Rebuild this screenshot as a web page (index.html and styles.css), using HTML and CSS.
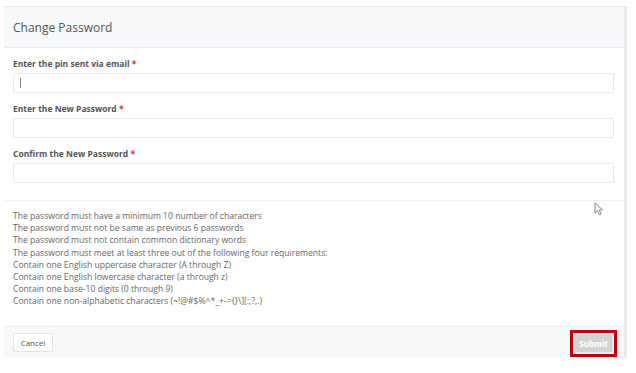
FILE: index.html
```html
<!DOCTYPE html>
<html lang="en">

<head>
  <meta charset="UTF-8">
  <meta name="viewport" content="width=device-width, initial-scale=1.0">
  <title>Change Password</title>
  <link rel="stylesheet" href="styles.css">
</head>

<body>
  <div class="modal">
    <div class="modal-header">
      <h1>Change Password</h1>
    </div>

    <form class="modal-form">
      <div class="field">
        <label for="pin">Enter the pin sent via email <span class="req">*</span></label>
        <div class="input-wrap">
          <input type="text" id="pin">
          <span class="caret"></span>
        </div>
      </div>
      <div class="field">
        <label for="newpass">Enter the New Password <span class="req">*</span></label>
        <input type="password" id="newpass">
      </div>
      <div class="field">
        <label for="confirm">Confirm the New Password <span class="req">*</span></label>
        <input type="password" id="confirm">
      </div>
    </form>

    <div class="rules">
      <p>The password must have a minimum 10 number of characters</p>
      <p>The password must not be same as previous 6 passwords</p>
      <p>The password must not contain common dictionary words</p>
      <p>The password must meet at least three out of the following four requirements:</p>
      <p>Contain one English uppercase character (A through Z)</p>
      <p>Contain one English lowercase character (a through z)</p>
      <p>Contain one base-10 digits (0 through 9)</p>
      <p>Contain one non-alphabetic characters (~!@#$%^*_+-={}\][:;?,.)</p>
      <svg class="pointer" width="10" height="14" viewBox="0 0 10 14">
        <path d="M1 1 L1 11 L3.5 8.6 L5.6 12.8 L7.2 12 L5.2 7.9 L8.6 7.9 Z" fill="#fff" stroke="#777" stroke-width="0.9" stroke-linejoin="round"/>
      </svg>
    </div>

    <div class="modal-footer">
      <button class="btn-cancel">Cancel</button>
      <div class="submit-mark">
        <button class="btn-submit" disabled>Submit</button>
      </div>
    </div>
  </div>
</body>

</html>
```

FILE: styles.css
```css
* {
  box-sizing: border-box;
  margin: 0;
  padding: 0;
  font-family: 'Open Sans', sans-serif;
}

body {
  background: #fff;
  color: #555;
}

.modal {
  margin: 6px 0 0 4px;
  width: 623px;
  border-top: 1px solid #e7e8ec;
  border-right: 3px solid #e9eaee;
  background: #fff;
}

.modal-header {
  height: 41px;
  padding: 0 9px;
  display: flex;
  align-items: center;
  background: #f7f8fa;
  border-bottom: 1px solid #e8eaed;
}

.modal-header h1 {
  font-size: 12px;
  font-weight: 400;
  color: #555;
  padding-top: 1px;
}

.modal-form {
  padding: 10px 10px 7px 9px;
  border-bottom: 1px solid #eef0f2;
}

.field {
  margin-bottom: 10px;
}

.field label {
  display: block;
  height: 12px;
  line-height: 12px;
  font-size: 8.5px;
  font-weight: 700;
  color: #555;
  margin-bottom: 3px;
}

.req {
  color: #d9363e;
}

.field input {
  display: block;
  width: 100%;
  height: 20px;
  border: 1px solid #e6e7ea;
  border-radius: 2px;
  background: #fff;
  outline: none;
}

.input-wrap {
  position: relative;
}

.caret {
  position: absolute;
  left: 7px;
  top: 5px;
  width: 1px;
  height: 10px;
  background: #888;
}

.rules {
  position: relative;
  padding: 9px 9px 18px;
  font-size: 8.6px;
  line-height: 12.2px;
  color: #666;
}

.pointer {
  position: absolute;
  left: 590px;
  top: 1px;
}

.modal-footer {
  height: 32px;
  padding: 0 7px 0 9px;
  display: flex;
  align-items: center;
  justify-content: space-between;
  background: #f7f8fa;
  border-top: 1px solid #e9ebee;
}

.btn-cancel {
  width: 40px;
  height: 19px;
  background: #fff;
  border: 1px solid #e3e4e7;
  border-radius: 2px;
  color: #555;
  font-size: 8px;
  cursor: pointer;
}

.submit-mark {
  border: 3px solid #c5000b;
  padding: 1px;
  margin-top: 2px;
}

.btn-submit {
  display: block;
  width: 39px;
  height: 19px;
  background: #d3d3d3;
  border: 1px solid #e6e6e6;
  color: #fff;
  font-size: 8px;
  font-weight: 700;
}
```
